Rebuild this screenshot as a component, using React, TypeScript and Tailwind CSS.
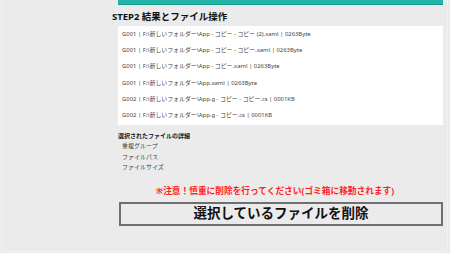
const rows = [
  "G001 | F:\\新しいフォルダー\\App - コピー - コピー (2).xaml | 0263Byte",
  "G001 | F:\\新しいフォルダー\\App - コピー - コピー.xaml | 0263Byte",
  "G001 | F:\\新しいフォルダー\\App - コピー.xaml | 0263Byte",
  "G001 | F:\\新しいフォルダー\\App.xaml | 0263Byte",
  "G002 | F:\\新しいフォルダー\\App.g - コピー - コピー.cs | 0001KB",
  "G002 | F:\\新しいフォルダー\\App.g - コピー.cs | 0001KB",
];

const details = ["重複グループ", "ファイルパス", "ファイルサイズ"];

export default function App() {
  return (
    <div
      className="relative h-[253px] w-[450px] overflow-hidden bg-[#ebebeb] text-[#222]"
      style={{ fontFamily: '"Noto Sans", "Noto Sans CJK JP", sans-serif' }}
    >
      {/* window frame lines */}
      <div className="pointer-events-none absolute left-[1px] top-0 h-[252px] w-[447px] border-b border-l border-r border-[#f2f2f2]" />

      <div className="flex">
        <div className="w-[112px] shrink-0" />

        <div className="flex flex-1 flex-col pr-[7px]">
          <div className="ml-[6px] h-[5px] border-b border-[#179c8e] bg-[#22b4a6]" />

          <div className="mt-[5px] h-[14px] text-[9.5px] font-bold leading-[14px] text-[#111]">
            STEP2 結果とファイル操作
          </div>

          <div className="ml-[6px] mt-[2px] h-[99px] bg-white pl-[4px]">
            {rows.map((row) => (
              <div
                key={row}
                className="flex h-[16.3px] items-center whitespace-pre text-[5.9px] text-[#444]"
              >
                {row}
              </div>
            ))}
          </div>

          <div className="ml-[6px] mt-[6px]">
            <p className="text-[6px] font-bold leading-[10px] text-[#1a1a1a]">
              選択されたファイルの詳細
            </p>
            <ul className="pl-[4px]">
              {details.map((item) => (
                <li key={item} className="text-[6px] leading-[10.5px] text-[#444]">
                  {item}
                </li>
              ))}
            </ul>
          </div>

          <p className="ml-[6px] mr-[11px] mt-[12px] text-center text-[8.7px] font-bold leading-[12px] text-[#ff1f1f]">
            ※注意！慎重に削除を行ってください(ゴミ箱に移動されます)
          </p>

          <button className="ml-[7px] mt-[5px] flex h-[24px] items-center justify-center border-2 border-[#6f6f6f] bg-[#ebebeb] text-[13.5px] font-bold text-[#111]">
            選択しているファイルを削除
          </button>
        </div>
      </div>
    </div>
  );
}
